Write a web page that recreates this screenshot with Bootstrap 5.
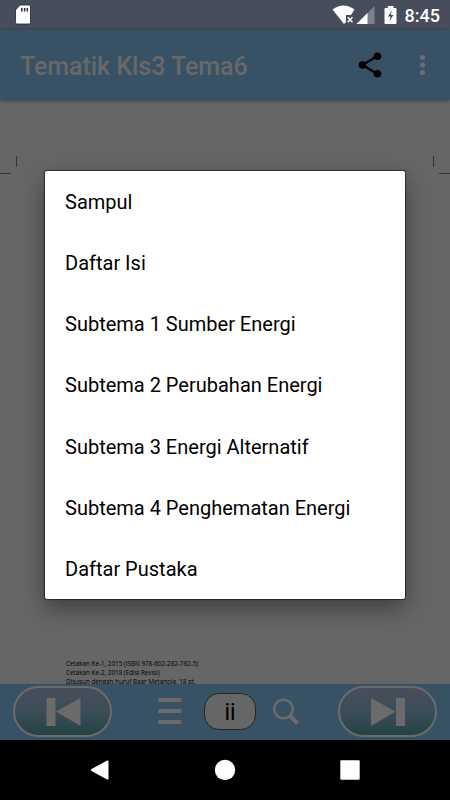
<!DOCTYPE html>
<html lang="id">
<head>
<meta charset="utf-8">
<meta name="viewport" content="width=device-width, initial-scale=1">
<title>Tematik Kls3 Tema6</title>
<link href="https://cdn.jsdelivr.net/npm/bootstrap@5.3.0/dist/css/bootstrap.min.css" rel="stylesheet">
<style>
body{font-family:Roboto,sans-serif;background:#000;color:#000}
.screen{width:450px;height:800px;background:#666}
.status{height:30px;background:#474d5a;color:#fff}
.clock{font-size:18px;line-height:31px;font-weight:500;margin-right:10px}
.appbar{height:70px;background:#385265;box-shadow:0 1px 4px rgba(0,0,0,.35);color:#686868}
.app-title{font-size:25px;line-height:30px;font-weight:500;margin:4px 0 0 20px;letter-spacing:-.05px}
.sheet-page{height:584px;background:#666}
.imprint{font:6.3px/9px "Open Sans",sans-serif;left:66px;top:559px;color:#000;white-space:nowrap}
.imprint div{width:max-content}
.toolbar-bottom{height:56px;background:#385265;padding:0 13px 1px}
.pager{width:99px;height:51px;border:2px solid #6b6b6b;border-radius:26px;background:linear-gradient(#484e5b,#3b4d58 50%,#234344)}
.tools{margin-left:46px;padding-bottom:1px}
.page-no{width:52px;height:37px;border:1px solid #28231f;border-radius:15px;background:#666;font-size:23px;line-height:37px;margin:0 17px 0 22px}
.sysnav{height:60px}
.choices{left:45px;top:171px;width:360px;height:428px;border-radius:2px;background:#fff;box-shadow:0 0 1px 1px rgba(0,0,0,.5),0 9px 24px rgba(0,0,0,.4)}
.choice{height:61.25px;font-size:20px;line-height:24px;padding-left:20px}
svg{display:block;flex:none}
</style>
</head>
<body>
<main class="screen position-relative overflow-hidden d-flex flex-column">
  <div class="status d-flex justify-content-between flex-shrink-0">
    <svg width="40" height="30"><path d="M20 5h9q1.500 0 1.500 1.500v16q0 1.500-1.500 1.500H17q-1.500 0-1.500-1.500V10z" fill="#fff" stroke="#152536" stroke-width=".8"/><path d="M21.800 8v3.500M24.600 8v3.500M27.300 8v3.500" stroke="#222b3b" stroke-width="1.500"/></svg>
    <div class="d-flex">
      <svg width="75" height="30" viewBox="329.500 0 75 30"><path d="M332 9.500Q343 1.500 354 9.500L350.500 15H345.500V22L343.500 24z" fill="#fff"/><path d="m347.300 17.300 4.600 4.900m0-4.900-4.600 4.900" stroke="#fff" stroke-width="1.500"/><path d="M374 6v18h-18z" fill="#7d818a"/><path d="M367 13v11H356z" fill="#fff"/><path d="M387.300 8V6h5.700v2h2q1 0 1 1v14q0 1-1 1h-10q-1 0-1-1V9q0-1 1-1z" fill="#fff"/><path d="M391.500 10.500 387.500 16.500h2.700l-1.400 5 4-6.400h-2.600z" fill="#38404c"/></svg>
      <div class="clock">8:45</div>
    </div>
  </div>
  <header class="appbar d-flex align-items-center justify-content-between position-relative flex-shrink-0">
    <h1 class="app-title">Tematik Kls3 Tema6</h1>
    <svg width="100" height="70" viewBox="350 30 100 70"><path d="m377.500 56-15 9 15 9" fill="none" stroke="#000" stroke-width="2.400"/><circle cx="377.500" cy="56.300" r="3.800" fill="#000"/><circle cx="362.500" cy="65" r="3.800" fill="#000"/><circle cx="377.500" cy="73.700" r="3.800" fill="#000"/><g fill="#6b6b6b"><circle cx="422.500" cy="57.500" r="2.600"/><circle cx="422.500" cy="65" r="2.600"/><circle cx="422.500" cy="72.500" r="2.600"/></g></svg>
  </header>
  <section class="sheet-page flex-shrink-0">
    <div class="position-relative">
      <svg width="450" height="120" viewBox="0 100 450 120"><path d="M16.500 156v11M0 173.500h11M433.500 156v11M439 173.500h11" stroke="#353535"/></svg>
      <div class="imprint position-absolute">
        <div>Cetakan Ke-1, 2015 (ISBN 978-602-282-782-5)</div>
        <div>Cetakan Ke-2, 2018 (Edisi Revisi)</div>
        <div>Disusun dengan huruf Baar Metanoia, 18 pt.</div>
      </div>
    </div>
  </section>
  <footer class="toolbar-bottom d-flex align-items-center flex-shrink-0 position-relative">
    <div class="pager d-flex align-items-center justify-content-center"><svg width="36" height="30"><path d="M1.500 1h9v28h-9zM11 14.500 35.500 1v28z" fill="#6b6b6b"/></svg></div>
    <div class="tools d-flex align-items-center">
      <svg width="24" height="30"><path d="M.3 4h23M.3 15h23M.3 26h23" stroke="#6b6b6b" stroke-width="4"/></svg>
      <div class="page-no text-center">ii</div>
      <svg width="26" height="28"><circle cx="10.500" cy="12" r="9.300" fill="none" stroke="#6b6b6b" stroke-width="2.500"/><path d="m16.800 18.500 8 8" stroke="#6b6b6b" stroke-width="4"/></svg>
    </div>
    <div class="pager d-flex align-items-center justify-content-center ms-auto"><svg width="36" height="30"><path d="M26 1h9v28h-9zM1 1l24.500 13.500L1 29z" fill="#6b6b6b"/></svg></div>
  </footer>
  <nav class="sysnav bg-black flex-shrink-0"><svg width="450" height="60"><path d="M107.500 21.500v17L92 30z" fill="#fff" stroke="#fff" stroke-width="2" stroke-linejoin="round"/><circle cx="225" cy="30" r="10.200" fill="#fff"/><rect x="340.300" y="20.300" width="19.400" height="19.400" rx="1" fill="#fff"/></svg></nav>
  <div class="choices position-absolute" role="dialog">
    <div class="choice d-flex align-items-center">Sampul</div>
    <div class="choice d-flex align-items-center">Daftar Isi</div>
    <div class="choice d-flex align-items-center">Subtema 1 Sumber Energi</div>
    <div class="choice d-flex align-items-center">Subtema 2 Perubahan Energi</div>
    <div class="choice d-flex align-items-center">Subtema 3 Energi Alternatif</div>
    <div class="choice d-flex align-items-center">Subtema 4 Penghematan Energi</div>
    <div class="choice d-flex align-items-center">Daftar Pustaka</div>
  </div>
</main>
<script src="https://cdn.jsdelivr.net/npm/bootstrap@5.3.0/dist/js/bootstrap.bundle.min.js"></script>
</body>
</html>
